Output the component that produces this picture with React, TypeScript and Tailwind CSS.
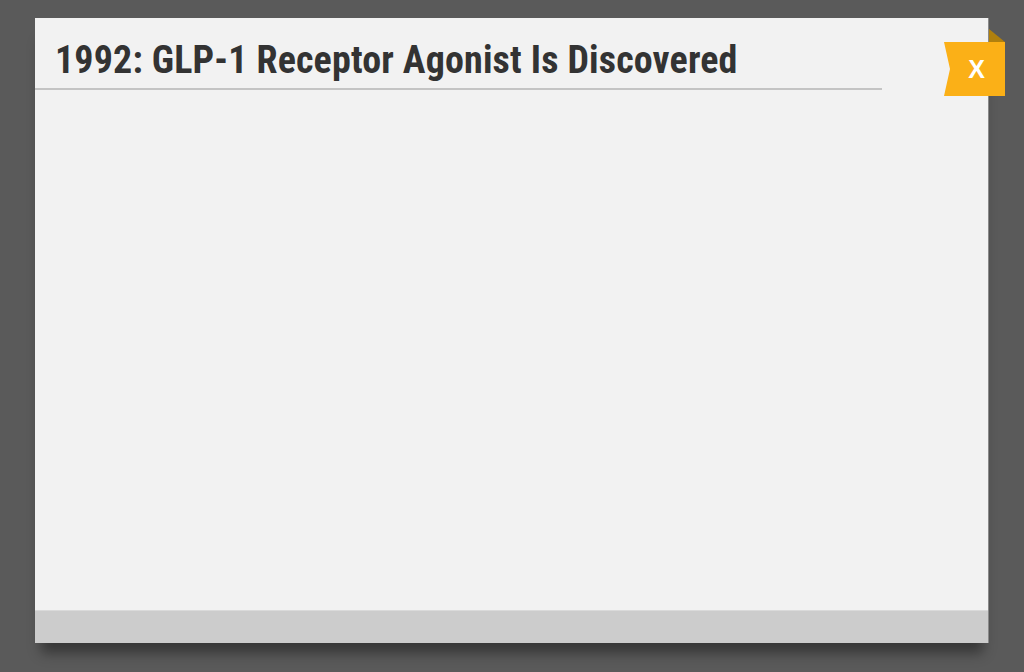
import React from 'react';

// 弹窗卡片：标题 + 关闭丝带 + 底栏
const CloseRibbon: React.FC = () => (
  <div className="absolute left-[909px] top-[11px] h-[67px] w-[61px]">
    <svg width="61" height="67" viewBox="0 0 61 67" className="absolute left-0 top-0">
      {/* 折角 */}
      <polygon points="45,0 61,13 45,13" fill="#b0800e" />
      {/* 丝带主体，左侧内凹 */}
      <polygon points="0,13 61,13 61,67 0,67 6,40" fill="#fbb017" />
    </svg>
    <span
      className="absolute left-[4px] right-0 top-[13px] flex h-[54px] items-center justify-center text-[25px] font-bold leading-none text-white"
      style={{ fontFamily: '"Liberation Sans", Arial, sans-serif' }}
    >
      X
    </span>
  </div>
);

export default function App() {
  return (
    <div className="h-[672px] w-[1024px] overflow-hidden bg-[#5a5a5a] pl-[35px] pt-[18px]">
      <div className="relative flex h-[625px] w-[954px] flex-col border-r border-[#8a8a8a] bg-[#f2f2f2] shadow-[0_16px_12px_-6px_rgba(0,0,0,0.4)]">
        <div className="mr-[106px] flex h-[72px] items-end border-b-2 border-[#c4c4c4] pb-[3px] pl-[20px]">
          <h1
            className="text-[38px] font-bold leading-[50px] tracking-[0.15px] text-[#333333]"
            style={{ fontFamily: '"Roboto Condensed", Roboto, sans-serif', fontStretch: 'condensed' }}
          >
            1992: GLP-1 Receptor Agonist Is Discovered
          </h1>
        </div>
        <div className="flex-1" />
        <div className="h-[33px] border-t border-[#dadada] bg-[#cccccc]" />
        <CloseRibbon />
      </div>
    </div>
  );
}
